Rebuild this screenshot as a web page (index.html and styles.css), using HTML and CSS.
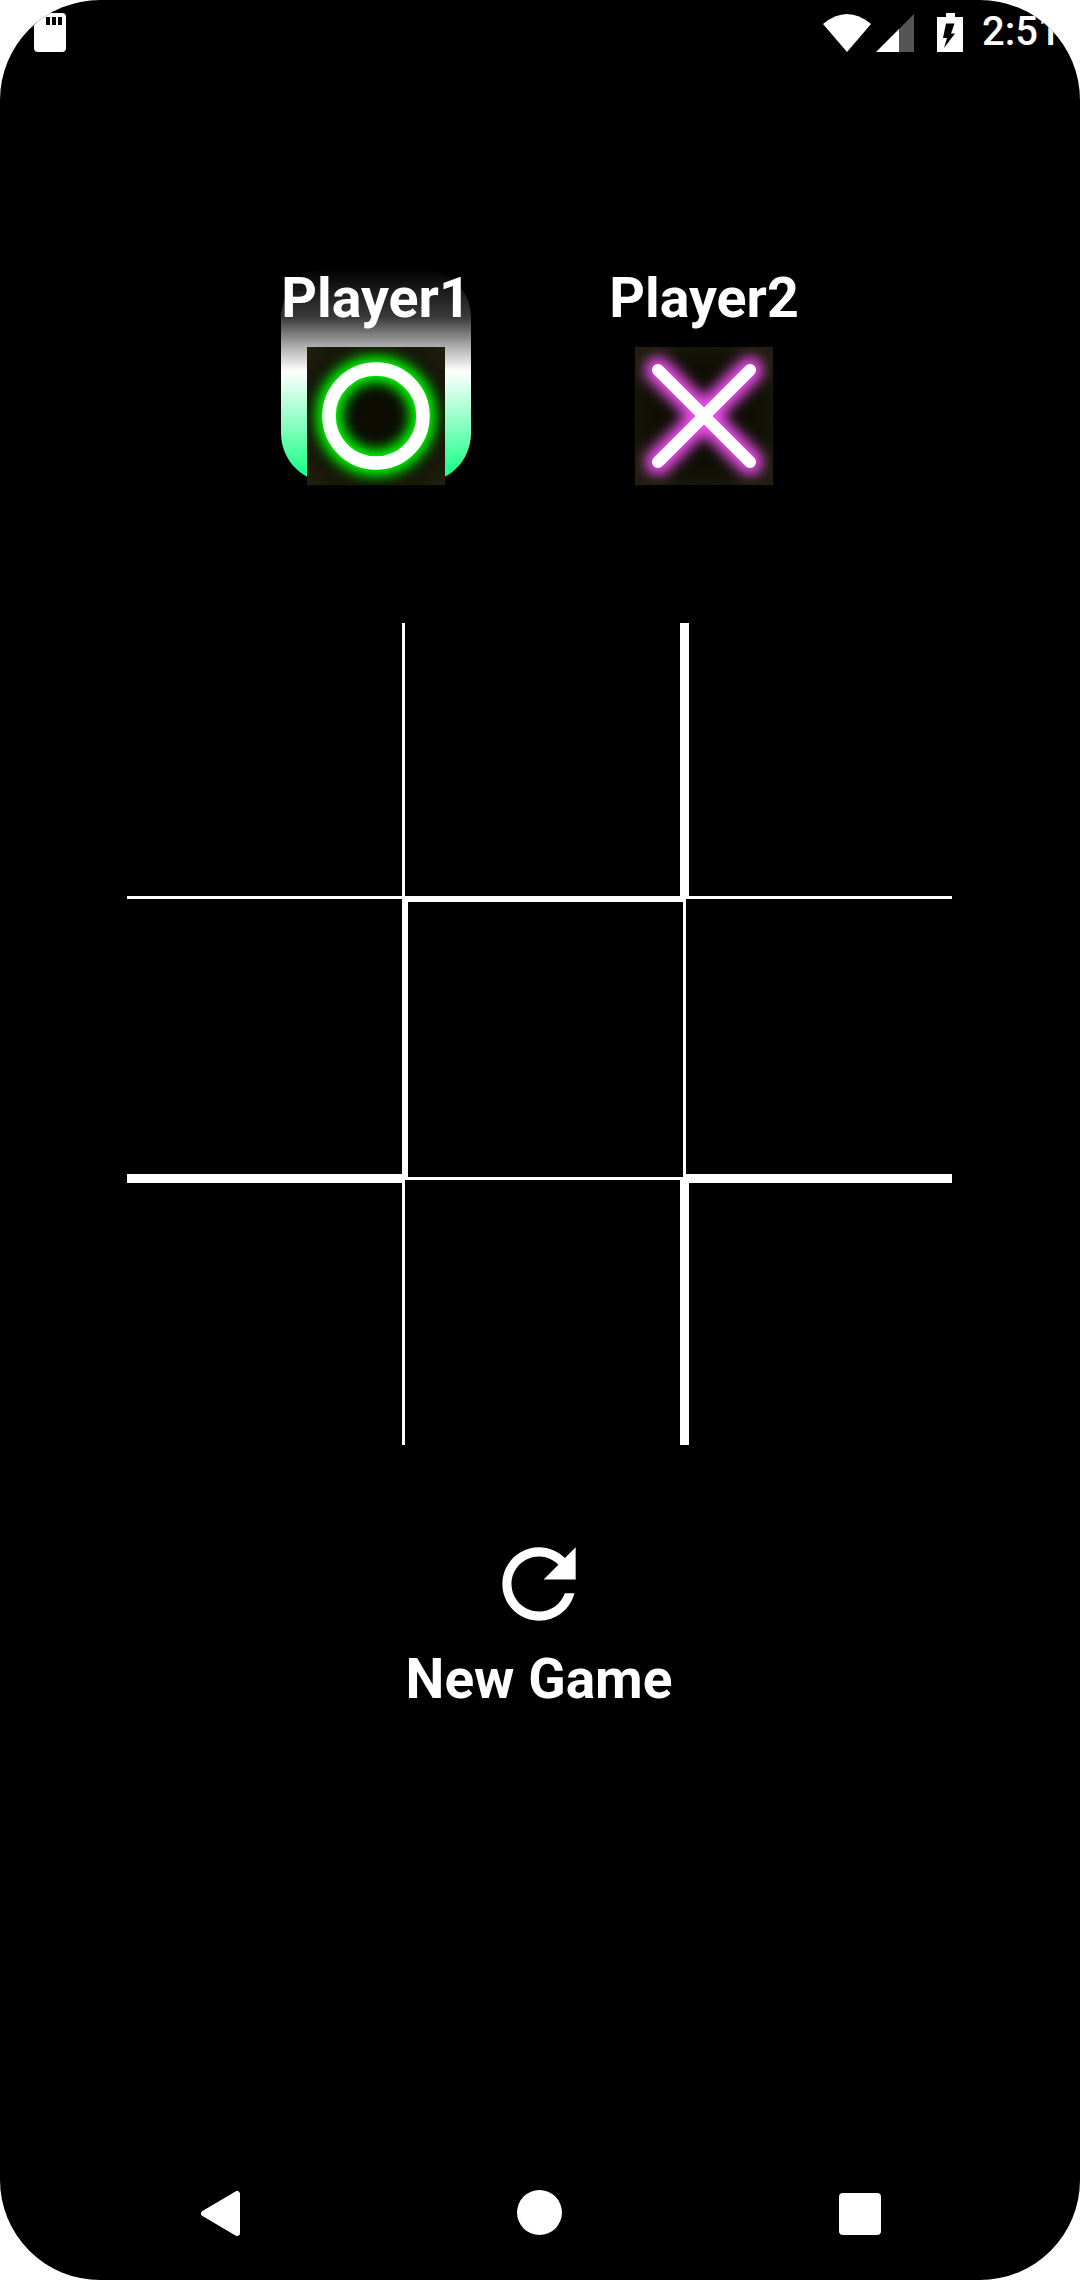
FILE: index.html
```html
<!DOCTYPE html>
<html lang="en">
<head>
    <meta charset="UTF-8">
    <meta name="viewport" content="width=device-width, initial-scale=1.0">
    <title>Tic Tac Toe</title>
    <link rel="stylesheet" href="styles.css">
</head>
<body>
    <div class="screen">
        <!-- status bar -->
        <div class="status-bar">
            <svg class="sd-icon" viewBox="0 0 32 39">
                <path fill-rule="evenodd" d="M12 0H28a4 4 0 0 1 4 4V35a4 4 0 0 1-4 4H4a4 4 0 0 1-4-4V12ZM12 4V12H16V4ZM18 4V12H22V4ZM24 4V12H28V4Z"/>
            </svg>
            <div class="status-right">
                <svg class="wifi-icon" viewBox="0 0 48 38"><path d="M24 38L0 10Q24-10 48 10Z"/></svg>
                <svg class="signal-icon" viewBox="0 0 38 38">
                    <path d="M0 38L23 15V38Z"/>
                    <path class="signal-empty" d="M23 15L38 0V38H23Z"/>
                </svg>
                <svg class="battery-icon" viewBox="0 0 26 39">
                    <path fill-rule="evenodd" d="M9 0H18V4H26V39H0V4H9ZM9 10.5H17.5L14 20.5H18L7 35L10 25H6Z"/>
                </svg>
                <span class="clock">2:51</span>
            </div>
        </div>

        <!-- players -->
        <div class="players">
            <div class="player active">
                <div class="player-name">Player1</div>
                <svg class="piece" viewBox="0 0 138 138">
                    <defs>
                        <filter id="glow" x="-30%" y="-30%" width="160%" height="160%">
                            <feGaussianBlur stdDeviation="6.5"/>
                        </filter>
                    </defs>
                    <circle class="glow-green" cx="69" cy="69" r="47" filter="url(#glow)"/>
                    <circle class="core" cx="69" cy="69" r="47"/>
                </svg>
            </div>
            <div class="player">
                <div class="player-name">Player2</div>
                <svg class="piece" viewBox="0 0 138 138">
                    <path class="glow-pink" d="M23 23L115 115M115 23L23 115" filter="url(#glow)"/>
                    <path class="core core-x" d="M23 23L115 115M115 23L23 115"/>
                </svg>
            </div>
        </div>

        <!-- board -->
        <div class="board">
            <div class="cell c1"></div>
            <div class="cell c2"></div>
            <div class="cell c3"></div>
            <div class="cell c4"></div>
            <div class="cell c5"></div>
            <div class="cell c6"></div>
            <div class="cell c7"></div>
            <div class="cell c8"></div>
            <div class="cell c9"></div>
        </div>

        <!-- new game -->
        <div class="new-game">
            <svg class="refresh-icon" viewBox="0 0 24 24">
                <path d="M17.65 6.35C16.2 4.9 14.21 4 12 4c-4.42 0-7.99 3.58-7.99 8s3.57 8 7.99 8c3.73 0 6.84-2.55 7.73-6h-2.08c-.82 2.33-3.04 4-5.65 4-3.31 0-6-2.69-6-6s2.69-6 6-6c1.66 0 3.14.69 4.22 1.78L13 11h7V4l-2.35 2.35z"/>
            </svg>
            <div class="new-game-label">New Game</div>
        </div>

        <!-- nav bar -->
        <div class="nav-bar">
            <svg class="nav-back" viewBox="0 0 39 45"><path d="M36 3V42L3 22.5Z"/></svg>
            <div class="nav-home"></div>
            <div class="nav-recent"></div>
        </div>
    </div>
</body>
</html>
```
FILE: styles.css
```css
* { box-sizing: border-box; }
body {
    margin: 0;
    background: white;
    font-family: Roboto, "Liberation Sans", sans-serif;
    color: white;
}
svg { display: block; fill: white; }
.screen {
    width: 1080px;
    height: 2280px;
    background: black;
    border-radius: 100px;
    overflow: hidden;
    display: flex;
    flex-direction: column;
}

/* status bar */
.status-bar {
    display: flex;
    justify-content: space-between;
    padding: 13px 0 0 34px;
    height: 52px;
}
.sd-icon { width: 32px; height: 39px; }
.status-right {
    display: flex;
    align-items: flex-start;
    width: 257px;
}
.wifi-icon { width: 48px; height: 38px; margin-top: 1px; }
.signal-icon { width: 38px; height: 38px; margin: 1px 0 0 5px; }
.signal-empty { fill: #555; }
.battery-icon { width: 26px; height: 39px; margin-left: 23px; }
.clock {
    margin-left: 19px;
    font-size: 40px;
    font-weight: 500;
    line-height: 40px;
    margin-top: -1px;
}

/* players */
.players {
    display: flex;
    justify-content: center;
    gap: 138px;
    margin-top: 216px;
}
.player {
    width: 190px;
    height: 215px;
    border-radius: 50px;
    display: flex;
    flex-direction: column;
    align-items: center;
}
.player.active {
    background: linear-gradient(to bottom, #000 0%, #3a3a3a 23%, #aaa 36%, #fff 48%, #22ff8c 94%);
}
.player-name {
    font-size: 55.5px;
    font-weight: 700;
    line-height: 61px;
    margin-bottom: 18px;
    white-space: nowrap;
}
.piece {
    width: 138px;
    height: 138px;
    flex-shrink: 0;
    background: radial-gradient(circle, #0c0c03 30%, #111106 60%, #20200e 100%);
}
.core { fill: none; stroke: white; stroke-width: 13.5; }
.core-x { stroke-width: 12; stroke-linecap: round; }
.glow-green { fill: none; stroke: #00ff00; stroke-width: 26; }
.glow-pink { fill: none; stroke: #f050f0; stroke-width: 26; stroke-linecap: round; }

/* board */
.board {
    display: grid;
    grid-template-columns: 278px 278px 269px;
    grid-template-rows: 276px 281px 265px;
    width: 825px;
    margin: 140px 0 0 127px;
}
.cell { border: 0 solid white; }
.c1 { border-width: 0 3px 3px 0; }
.c2 { border-width: 0 3px 3px 0; }
.c3 { border-width: 0 0 3px 6px; }
.c4 { border-width: 0 3px 6px 0; }
.c5 { border-width: 3px 0 3px 3px; }
.c6 { border-width: 0 0 6px 3px; }
.c7 { border-width: 3px 3px 0 0; }
.c8 { border-width: 0 3px 0 0; }
.c9 { border-width: 3px 0 0 6px; }

/* new game */
.new-game {
    display: flex;
    flex-direction: column;
    align-items: center;
    margin-top: 84px;
}
.refresh-icon { width: 110px; height: 110px; margin-right: 2px; }
.new-game-label {
    font-size: 55px;
    font-weight: 700;
    line-height: 66px;
    margin: 7px 2px 0 0;
}

/* nav bar */
.nav-bar {
    margin-top: auto;
    display: flex;
    justify-content: space-between;
    align-items: center;
    padding: 0 199px 43px 201px;
}
.nav-back { width: 39px; height: 45px; }
.nav-back path { stroke: white; stroke-width: 6; stroke-linejoin: round; }
.nav-home {
    width: 45px;
    height: 45px;
    border-radius: 50%;
    background: white;
    margin-bottom: 2px;
}
.nav-recent {
    width: 42px;
    height: 42px;
    border-radius: 4px;
    background: white;
}
```
